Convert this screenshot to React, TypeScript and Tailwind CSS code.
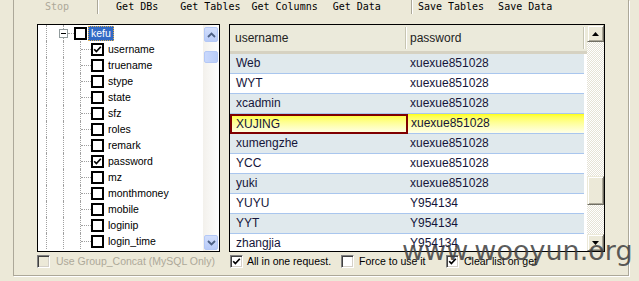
import React from 'react';

const fields = [
  'username',
  'truename',
  'stype',
  'state',
  'sfz',
  'roles',
  'remark',
  'password',
  'mz',
  'monthmoney',
  'mobile',
  'loginip',
  'login_time',
];
const picked = ['username', 'password'];

const rows = [
  ['Web', 'xuexue851028'],
  ['WYT', 'xuexue851028'],
  ['xcadmin', 'xuexue851028'],
  ['XUJING', 'xuexue851028'],
  ['xumengzhe', 'xuexue851028'],
  ['YCC', 'xuexue851028'],
  ['yuki', 'xuexue851028'],
  ['YUYU', 'Y954134'],
  ['YYT', 'Y954134'],
  ['zhangjia', 'Y954134'],
];

function Tick({ className = '' }: { className?: string }) {
  return (
    <svg viewBox="0 0 9 9" className={className}>
      <path d="M1.2 4.2 L3.4 6.6 L7.8 1.8" fill="none" stroke="currentColor" strokeWidth="1.7" />
    </svg>
  );
}

function TreeBox({ on }: { on?: boolean }) {
  return (
    <div className="flex h-[13px] w-[13px] flex-none items-center justify-center border-2 border-black bg-white text-black">
      {on && <Tick className="h-[9px] w-[9px]" />}
    </div>
  );
}

function ClassicBox({ on, disabled }: { on?: boolean; disabled?: boolean }) {
  return (
    <div
      className={`flex h-[13px] w-[13px] flex-none items-center justify-center border border-t-[#808080] border-l-[#808080] border-b-white border-r-white shadow-[inset_1px_1px_0_#404040,inset_-1px_-1px_0_#d4d0c8] ${
        disabled ? 'bg-[#ece9d8]' : 'bg-white'
      }`}
    >
      {on && <Tick className="h-[9px] w-[9px] text-black" />}
    </div>
  );
}

function LunaButton({ dir }: { dir: 'up' | 'down' }) {
  return (
    <div className="flex h-[15px] w-[14px] items-center justify-center rounded-[2px] border border-[#b4c8f6] bg-gradient-to-b from-[#d2defc] to-[#b8cbf8]">
      <svg viewBox="0 0 9 6" className="h-[6px] w-[9px]">
        <path
          d={dir === 'up' ? 'M1 5 L4.5 1.5 L8 5' : 'M1 1 L4.5 4.5 L8 1'}
          fill="none"
          stroke="#4d6185"
          strokeWidth="1.8"
        />
      </svg>
    </div>
  );
}

function ClassicButton({ dir }: { dir: 'up' | 'down' }) {
  return (
    <div className="flex h-[17px] w-[17px] items-center justify-center border border-t-[#ece9d8] border-l-[#ece9d8] border-b-[#716f64] border-r-[#716f64] bg-[#ece9d8] shadow-[inset_1px_1px_0_#fff,inset_-1px_-1px_0_#aca899]">
      <svg viewBox="0 0 7 4" className="h-[4px] w-[7px]">
        <path d={dir === 'up' ? 'M0 4 L3.5 0 L7 4 Z' : 'M0 0 L3.5 4 L7 0 Z'} fill="#000" />
      </svg>
    </div>
  );
}

const dot = 'border-dotted border-[#a0a0a0]';

export default function App() {
  return (
    <div className="relative h-[281px] w-[639px] overflow-hidden bg-[#ece9d8] font-['Liberation_Sans',Arial,sans-serif]">
      <div className="ml-[13px] h-[276px] w-[616px] border-x border-b border-[#aca899] shadow-[1px_1px_0_#fff]">
        {/* toolbar */}
        <div className="flex h-[14px] items-center font-['DejaVu_Sans_Mono','Liberation_Mono',monospace] text-[10px] leading-[14px] text-black">
          <span className="ml-[31px] text-[#aca899]">Stop</span>
          <span className="ml-[28px] h-[14px] w-[2px] border-l border-r border-l-[#aca899] border-r-white" />
          <span className="ml-[17px]">Get DBs</span>
          <span className="ml-[22px]">Get Tables</span>
          <span className="ml-[11px]">Get Columns</span>
          <span className="ml-[15px]">Get Data</span>
          <span className="ml-[30px] h-[14px] w-[2px] border-l border-r border-l-[#aca899] border-r-white" />
          <span className="ml-[5px]">Save Tables</span>
          <span className="ml-[14px]">Save Data</span>
        </div>

        <div className="mt-[10px] flex gap-[9px] pl-[23px]">
          {/* tree */}
          <div className="flex w-[183px] flex-col">
            <div className="flex h-[228px] border border-black bg-white">
              <div className="w-[165px] overflow-hidden text-[10.5px] text-black">
                <div className="flex h-4 items-center">
                  <div className="h-full w-2" />
                  <div className={`h-full w-[17px] border-l ${dot}`} />
                  <div className={`relative h-full w-[11px] border-l ${dot}`}>
                    <div className={`absolute left-[4px] top-1/2 w-[6px] border-t ${dot}`} />
                    <div className="absolute -left-[5px] top-[4px] flex h-[9px] w-[9px] items-center justify-center border border-[#919b9c] bg-white">
                      <div className="h-px w-[5px] bg-black" />
                    </div>
                  </div>
                  <TreeBox />
                  <span className="ml-px h-[15px] border border-dotted border-[#e0b050] bg-[#316ac5] px-[2px] leading-[13px] text-white">
                    kefu
                  </span>
                </div>
                {fields.map((f) => (
                  <div key={f} className="flex h-4 items-center">
                    <div className="h-full w-2" />
                    <div className={`h-full w-[17px] border-l ${dot}`} />
                    <div className={`h-full w-[17px] border-l ${dot}`} />
                    <div className={`relative h-full w-[11px] border-l ${dot}`}>
                      <div className={`absolute left-0 top-1/2 w-[10px] border-t ${dot}`} />
                    </div>
                    <TreeBox on={picked.includes(f)} />
                    <span className="ml-1 leading-4">{f}</span>
                  </div>
                ))}
              </div>
              <div className="flex w-4 flex-col bg-gradient-to-r from-[#f3f1ec] to-[#fefefe] pl-px pt-[2px]">
                <LunaButton dir="up" />
                <div className="mt-[9px] h-[12px] w-[14px] rounded-[2px] border border-[#b4c8f6] bg-gradient-to-r from-[#c9d8fc] to-[#b9ccf8]" />
                <div className="flex-1" />
                <div className="mb-[1px]">
                  <LunaButton dir="down" />
                </div>
              </div>
            </div>
            <div className="mt-[3px] flex items-center text-[10.5px] text-[#aca899]">
              <ClassicBox disabled />
              <span className="ml-[6px] leading-[13px]">Use Group_Concat (MySQL Only)</span>
            </div>
          </div>

          {/* grid */}
          <div className="flex w-[376px] flex-col">
            <div className="flex h-[228px] border border-black bg-white">
              <div className="w-[357px] overflow-hidden">
                <div className="flex h-[29px] items-center border-b-[3px] border-[#d6d2c2] bg-[#ebeadb] text-[12px] text-[#222]">
                  <div className="w-[175px] pl-[5px]">username</div>
                  <div className="h-[22px] w-[2px] border-l border-r border-l-[#c7c5b2] border-r-white" />
                  <div className="w-[176px] pl-[3px]">password</div>
                  <div className="h-[22px] w-[2px] border-l border-r border-l-[#c7c5b2] border-r-white" />
                </div>
                {rows.map(([u, p], i) => {
                  const sel = u === 'XUJING';
                  const bg = sel
                    ? 'bg-gradient-to-b from-[#ffff00] to-[#ffffe8]'
                    : i % 2 === 0
                      ? 'bg-[#e0e9ed]'
                      : 'bg-white';
                  return (
                    <div
                      key={u}
                      className={`flex h-[20px] w-[354px] border-b border-[#a9c6ee] text-[12px] leading-[19px] text-[#15153a] ${bg}`}
                    >
                      {sel ? (
                        <>
                          <div className="-mb-px w-[178px] border-2 border-[#800000] pl-[4px] leading-[16px]">{u}</div>
                          <div className="w-[176px] pl-[3px]">{p}</div>
                        </>
                      ) : (
                        <>
                          <div className="w-[176px] pl-[6px]">{u}</div>
                          <div className="w-[178px] pl-[4px]">{p}</div>
                        </>
                      )}
                    </div>
                  );
                })}
              </div>
              <div className="flex w-[17px] flex-col bg-[repeating-conic-gradient(#e6e3d6_0_25%,#ffffff_0_50%)] bg-[length:2px_2px]">
                <ClassicButton dir="up" />
                <div className="mt-[134px] h-[29px] w-[17px] border border-t-[#ece9d8] border-l-[#ece9d8] border-b-[#716f64] border-r-[#716f64] bg-[#ece9d8] shadow-[inset_1px_1px_0_#fff,inset_-1px_-1px_0_#aca899]" />
                <div className="flex-1" />
                <ClassicButton dir="down" />
              </div>
            </div>
            <div className="mt-[3px] flex items-center text-[10.5px] leading-[13px] text-black">
              <div className="ml-px flex w-[111px] items-center">
                <ClassicBox on />
                <span className="ml-[4px]">All in one request.</span>
              </div>
              <div className="flex w-[105px] items-center">
                <ClassicBox />
                <span className="ml-[5px]">Force to use it</span>
              </div>
              <div className="flex items-center">
                <ClassicBox on />
                <span className="ml-[5px]">Clear list on get</span>
              </div>
            </div>
          </div>
        </div>
      </div>

      <div className="absolute left-[402px] top-[237px] font-['DejaVu_Sans',Verdana,sans-serif] text-[27px] leading-[27px] text-[#3e3e3e]/85">
        www.wooyun.org
      </div>
    </div>
  );
}
